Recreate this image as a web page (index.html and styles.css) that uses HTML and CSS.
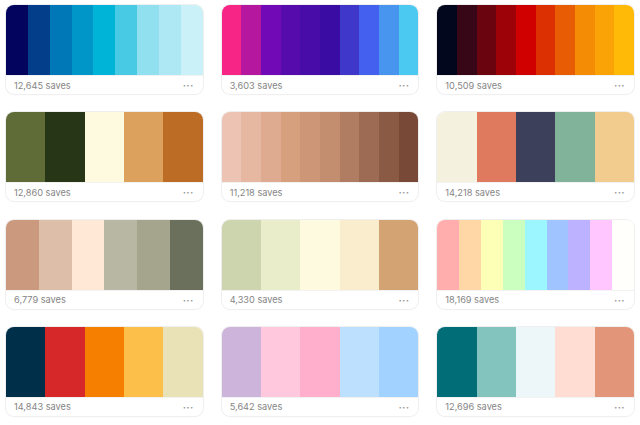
FILE: index.html
```html
<!DOCTYPE html>
<html lang="en">
<head>
  <meta charset="UTF-8">
  <meta name="viewport" content="width=device-width, initial-scale=1.0">
  <title>Trending Palettes</title>
  <link rel="stylesheet" href="styles.css">
</head>
<body>

  <div class="grid" id="palette-grid"></div>

  <script>
    const palettes = [
      { saves: '12,645', colors: ['#03045e', '#023e8a', '#0077b6', '#0096c7', '#00b4d8', '#48cae4', '#90e0ef', '#ade8f4', '#caf0f8'] },
      { saves: '3,603', colors: ['#f72585', '#b5179e', '#7209b7', '#560bad', '#480ca8', '#3a0ca3', '#3f37c9', '#4361ee', '#4895ef', '#4cc9f0'] },
      { saves: '10,509', colors: ['#03071e', '#370617', '#6a040f', '#9d0208', '#d00000', '#dc2f02', '#e85d04', '#f48c06', '#faa307', '#ffba08'] },
      { saves: '12,860', colors: ['#606c38', '#283618', '#fefae0', '#dda15e', '#bc6c25'] },
      { saves: '11,218', colors: ['#edc4b3', '#e6b8a2', '#deab90', '#d69f7e', '#cd9777', '#c38e70', '#b07d62', '#9d6b53', '#8a5a44', '#774936'] },
      { saves: '14,218', colors: ['#f4f1de', '#e07a5f', '#3d405b', '#81b29a', '#f2cc8f'] },
      { saves: '6,779', colors: ['#cb997e', '#ddbea9', '#ffe8d6', '#b7b7a4', '#a5a58d', '#6b705c'] },
      { saves: '4,330', colors: ['#ccd5ae', '#e9edc9', '#fefae0', '#faedcd', '#d4a373'] },
      { saves: '18,169', colors: ['#ffadad', '#ffd6a5', '#fdffb6', '#caffbf', '#9bf6ff', '#a0c4ff', '#bdb2ff', '#ffc6ff', '#fffffc'] },
      { saves: '14,843', colors: ['#003049', '#d62828', '#f77f00', '#fcbf49', '#eae2b7'] },
      { saves: '5,642', colors: ['#cdb4db', '#ffc8dd', '#ffafcc', '#bde0fe', '#a2d2ff'] },
      { saves: '12,696', colors: ['#006d77', '#83c5be', '#edf6f9', '#ffddd2', '#e29578'] }
    ];

    function renderPalettes() {
      const grid = document.getElementById('palette-grid');
      grid.innerHTML = '';

      palettes.forEach(palette => {
        const card = document.createElement('div');
        card.classList.add('card');

        const swatches = palette.colors
          .map(color => `<div class="swatch" style="background-color: ${color}"></div>`)
          .join('');

        card.innerHTML = `
          <div class="palette">${swatches}</div>
          <div class="card-footer">
            <span class="saves">${palette.saves} saves</span>
            <span class="more">&middot;&middot;&middot;</span>
          </div>
        `;
        grid.appendChild(card);
      });
    }

    renderPalettes();
  </script>
</body>
</html>
```

FILE: styles.css
```css
body {
  font-family: Inter, "Liberation Sans", Arial, sans-serif;
  background-color: #fff;
  margin: 0;
  padding: 0;
}

.grid {
  display: grid;
  grid-template-columns: repeat(3, 1fr);
  column-gap: 19px;
  row-gap: 18.3px;
  padding: 5px 6px;
}

.card {
  border-radius: 8px;
  overflow: hidden;
  background-color: #fff;
  box-shadow: 0 0 0 1px #efefef, 0 1px 2px rgba(0, 0, 0, 0.03);
}

.palette {
  display: flex;
  height: 70px;
}

.swatch {
  flex: 1;
}

.card-footer {
  height: 18px;
  display: flex;
  justify-content: space-between;
  align-items: center;
  padding: 0 9px 0 8px;
  border-top: 1px solid #f2f2f2;
}

.saves {
  font-size: 9.2px;
  color: #858585;
}

.more {
  font-size: 10px;
  color: #9a9a9a;
  letter-spacing: 0.3px;
  font-weight: bold;
}
```
